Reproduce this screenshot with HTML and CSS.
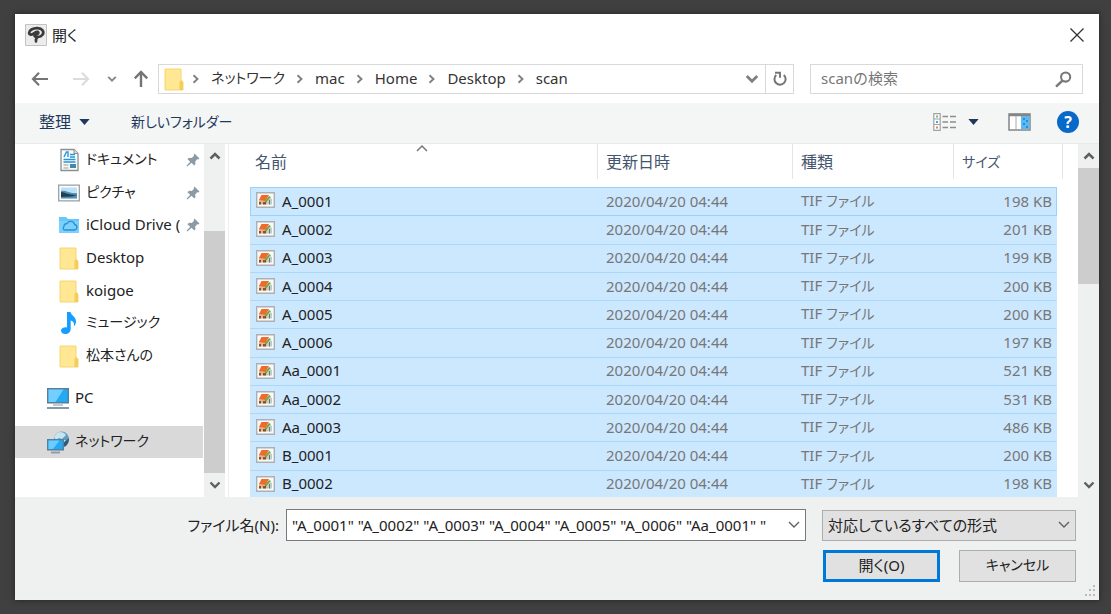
FILE: index.html
```html
<!DOCTYPE html>
<html lang="ja">
<head>
<meta charset="utf-8">
<title>開く</title>
<link rel="stylesheet" href="styles.css">
</head>
<body>
<svg class="defs" aria-hidden="true">
  <defs>
    <symbol id="folder" viewBox="0 0 22 24"><path d="M2 2h16v11l2 2v8H2z" fill="#ffe794"/><path d="M2 2h16v11l2 2v8H2z" fill="none" stroke="#f5d670"/><path d="M16.500 23v-8l1.500-2 2 2v8z" fill="#f3cf57"/></symbol>
    <symbol id="pin" viewBox="0 0 14 14"><path d="M8.500.5l5 5-1.300.9-1-.1-2 2.200.2 2.700-1.200 1.200-2.600-2.600L1.300 13.500l-.8-.8 3.700-3.900L1.500 6.300 3 4.800l2.700.2L7.900 3l-.1-1.100z" fill="#8c9aa5"/></symbol>
    <symbol id="down" viewBox="0 0 12 12"><path d="M1.500 3.500L6 8l4.500-4.500" fill="none" stroke="currentColor" stroke-width="2.400"/></symbol>
    <symbol id="thin-down" viewBox="0 0 12 12"><path d="M1 3l5 5 5-5" fill="none" stroke="#606060" stroke-width="1.400"/></symbol>
    <symbol id="up" viewBox="0 0 12 12"><path d="M1.500 8.500L6 4l4.500 4.500" fill="none" stroke="currentColor" stroke-width="2.600"/></symbol>
    <symbol id="next" viewBox="0 0 8 10"><path d="M1.500 1.200L5.500 5 1.500 8.800" fill="none" stroke="#808080" stroke-width="1.900"/></symbol>
    <symbol id="tif" viewBox="0 0 19 16"><path d="M.7.7h17.600v14.600H.7z" fill="#fafafa" stroke="#adb0b3" stroke-width="1.400"/><path d="M3 7.500l8 1v4H3z" fill="#ddb88e"/><path d="M3 10h2v2.500H3zM7 10h3v2.500H7z" fill="#8c5230"/><path d="M5.500 3H13l-3.500 6L3 8z" fill="#f06a2b"/><path d="M13 4l-4 5v1h2l4-5z" fill="#76a743"/><path d="M11 9.500l3-3.500 2 1v5.500h-5z" fill="#c3cdc7"/><path d="M13.500 8v4.500" stroke="#68776f"/></symbol>
  </defs>
</svg>
<main class="window">
  <header class="titlebar">
    <svg class="app-icon" viewBox="0 0 22 22"><path d="M.5.500h21v21H.5z" fill="#ececec" stroke="#c2c2c2"/><path d="M12.500 7.800c-2-.6-3.300 2.700-6.300 2.800C3.500 10.500 3.300 7.500 6.500 5.500c3.500-2 9-1.900 11 .7 2.200 3.300-.7 6.600-4.500 6.800-1.600.1-2.600-.3-3.400-.9M12.200 13.500c-1.200 1-1.400 2-1.200 3.800M12.500 7.800c1.700.8.700 2.500-1.500 2.800" fill="none" stroke="#3b3b3b" stroke-width="2.700" stroke-linecap="round" stroke-linejoin="round"/></svg>
    <h1 class="title">開く</h1>
    <button class="plain close" aria-label="閉じる"><svg viewBox="0 0 16 16"><path d="M1.500 1.500l13 13m0-13l-13 13" fill="none" stroke="#333" stroke-width="1.300"/></svg></button>
  </header>

  <nav class="navbar" aria-label="場所">
    <div class="history">
      <button class="plain arrow" aria-label="戻る"><svg viewBox="0 0 18 18"><path d="M17 9H2.500M8 2.800L2 9l6 6.200" fill="none" stroke="#757575" stroke-width="2.200"/></svg></button>
      <button class="plain arrow forward" aria-label="進む"><svg viewBox="0 0 18 18"><path d="M1 9h14.500M10 2.800L16 9l-6 6.200" fill="none" stroke="#dcdcdc" stroke-width="2.200"/></svg></button>
      <button class="plain recent" aria-label="最近の場所"><svg viewBox="0 0 12 12"><use href="#down"/></svg></button>
      <button class="plain arrow" aria-label="上へ"><svg viewBox="0 0 18 18"><path d="M9 17V2.500M2.800 8.300L9 2l6.200 6.300" fill="none" stroke="#757575" stroke-width="2.400"/></svg></button>
    </div>
    <div class="address">
      <svg class="folder-icon"><use href="#folder"/></svg>
      <svg class="next"><use href="#next"/></svg><a class="kana" href="#network">ネットワーク</a>
      <svg class="next"><use href="#next"/></svg><a href="#mac">mac</a>
      <svg class="next"><use href="#next"/></svg><a href="#home">Home</a>
      <svg class="next"><use href="#next"/></svg><a href="#desktop">Desktop</a>
      <svg class="next"><use href="#next"/></svg><a href="#scan">scan</a>
      <button class="plain history-list" aria-label="以前の場所"><svg viewBox="0 0 12 12"><use href="#down"/></svg></button>
      <button class="plain refresh" aria-label="更新"><svg viewBox="0 0 16 16"><path d="M11.800 3.900A5.600 5.600 0 1 1 4.200 4" fill="none" stroke="#757575" stroke-width="2"/><path d="M3 1.800h5v5" fill="none" stroke="#757575" stroke-width="1.900"/></svg></button>
    </div>
    <div class="search">
      <input type="search" aria-label="scanの検索" placeholder="scanの検索">
      <svg class="lens" viewBox="0 0 16 16"><circle cx="10" cy="5.700" r="4.300" fill="none" stroke="#777" stroke-width="1.900"/><path d="M7 9L1 14.700" stroke="#777" stroke-width="2.300"/></svg>
    </div>
  </nav>

  <div class="toolbar">
    <button class="plain organize">整理 <svg viewBox="0 0 12 7"><path d="M0 0h12L6 7z" fill="#1e395b"/></svg></button>
    <button class="plain new-folder">新しいフォルダー</button>
    <button class="plain views" aria-label="表示方法"><svg class="list-icon" viewBox="0 0 24 18"><path d="M.8.600h6.400v16.800H.8zM1 6h6M1 11.500h6" fill="#fff" stroke="#a2a2a2" stroke-width="1.200"/><path d="M3 2.500h2v2H3z" fill="#6fb596"/><path d="M3 8h2v2H3z" fill="#3ba7ee"/><path d="M3 13.500h2v2H3z" fill="#e08947"/><path d="M9.500 3.500H15m2 0h6M9.500 9H15m2 0h6M9.500 14.500H15m2 0h6" stroke="#8d8d8d" stroke-width="1.600"/></svg></button>
    <button class="plain view-menu" aria-label="その他のオプション"><svg viewBox="0 0 12 7"><path d="M0 0h12L6 7z" fill="#1e395b"/></svg></button>
    <button class="plain preview" aria-label="プレビュー"><svg viewBox="0 0 23 18"><path d="M1 1h21v16H1z" fill="#fff" stroke="#858585" stroke-width="1.500"/><path d="M1 2h21" stroke="#858585" stroke-width="2.500"/><path d="M8 3v13" stroke="#aaa"/><path d="M13 3h8.500v13H13z" fill="#5cb8f2"/><path d="M15 5h2v2h-2zm3 2h2v2h-2zm-3 3h2v2h-2zm3 3h2v2h-2z" fill="#278dd5"/></svg></button>
    <button class="plain help" aria-label="ヘルプ">?</button>
  </div>

  <div class="content">
    <aside class="sidebar">
      <ul class="quick">
        <li><svg class="icon" viewBox="0 0 22 24"><path d="M3 1.500h13l4 4v17H3z" fill="#fafafa" stroke="#8b9090" stroke-width="1.300"/><path d="M16 1.500v4h4" fill="#ddd" stroke="#8b9090"/><path d="M6 9l2.500-5H10v5M5.500 11.500h12M5.500 14h12M12 6.500h5M12 9h5" fill="none" stroke="#2596dd" stroke-width="1.400"/><path d="M5.500 17h5m-5 3h5" stroke="#999"/><path d="M12 16h6v4h-6z" fill="#4788aa"/></svg><a class="kana" href="#documents">ドキュメント</a><svg class="pin"><use href="#pin"/></svg></li>
        <li><svg class="icon" viewBox="0 0 22 24"><path d="M.7 4.200h20.600v15.600H.7z" fill="#fff" stroke="#999fa3" stroke-width="1.300"/><path d="M3 6.500h16v11H3z" fill="#b9e1f8"/><path d="M3 10c6-1 8 3 16 2v5.500H3z" fill="#548fb5"/><path d="M3 11c4 0 6 3 16 3l-5 1.500L3 16z" fill="#223f50"/></svg><a class="kana" href="#pictures">ピクチャ</a><svg class="pin"><use href="#pin"/></svg></li>
        <li><svg class="icon" viewBox="0 0 22 24"><path d="M1 4h7l2 2h11v14H1z" fill="#65c7fb"/><path d="M1 8h20v12H1z" fill="#7bd0ff"/><path d="M7 17h9.500a2.800 2.800 0 0 0 .2-5.500A4.200 4.200 0 0 0 9 10.500a3 3 0 0 0-3 3 1.900 1.900 0 0 0 1 3.500z" fill="none" stroke="#2a91ca" stroke-width="1.300"/></svg><a href="#icloud">iCloud Drive (</a><svg class="pin"><use href="#pin"/></svg></li>
        <li><svg class="icon"><use href="#folder"/></svg><a href="#desktop">Desktop</a></li>
        <li><svg class="icon"><use href="#folder"/></svg><a href="#koigoe">koigoe</a></li>
        <li><svg class="icon" viewBox="0 0 22 24"><path d="M9 1h3.500c.6 3.500 5.500 4.700 5.500 9.500 0 2.200-.8 3.700-2.200 5 .7-3.300-.2-5.300-3.100-6V18c0 3-2.600 5-5.500 5-2.500 0-4.200-1.300-4.200-3.200C3 17.500 5.500 16 9 16.400z" fill="#159eff"/></svg><a class="kana" href="#music">ミュージック</a></li>
        <li><svg class="icon"><use href="#folder"/></svg><a class="kana" href="#matsumoto">松本さんの</a></li>
      </ul>
      <ul class="places">
        <li><svg class="icon" viewBox="0 0 22 24"><path d="M.7 2.700h20.600v14H.7z" fill="#24a9f5" stroke="#5b7d95" stroke-width="1.400"/><path d="M1.500 3.500h15l-8 12.500h-7z" fill="#74ceff"/><path d="M6 19h10" stroke="#a7bac5" stroke-width="1.500"/><path d="M0 22h22" stroke="#8199a8" stroke-width="2"/></svg><a href="#pc">PC</a></li>
        <li class="current"><svg class="icon" viewBox="0 0 22 24"><circle cx="14.500" cy="9" r="7.500" fill="#619bbd"/><path d="M10 3c3-2 7-1 9 2l-4 4-3-1-3 2-2-3zM17 10l4 1-3 4-3-2z" fill="#c7e3ee"/><path d="M16 13l6-5c0 6-3 9-6 9z" fill="#345a7a"/><path d="M.7 9.700h15.600v10H.7z" fill="#24a9f5" stroke="#50819f" stroke-width="1.400"/><path d="M1.500 10.500h11L6 19H1.500z" fill="#6dccff"/><path d="M4 22.500h9" stroke="#879ba8" stroke-width="1.800"/></svg><a class="kana" href="#network" aria-current="page">ネットワーク</a></li>
      </ul>
    </aside>
    <div class="scrollbar side-scroll" aria-hidden="true"><svg><use href="#up"/></svg><div class="track"><div class="thumb"></div></div><svg><use href="#down"/></svg></div>
    <section class="files">
      <table>
        <colgroup><col><col class="date-col"><col class="type-col"><col class="size-col"></colgroup>
        <thead><tr><th>名前<svg class="sort" viewBox="0 0 12 8"><path d="M1 7l5-5 5 5" fill="none" stroke="#777" stroke-width="1.500"/></svg></th><th>更新日時</th><th>種類</th><th class="kana size">サイズ</th></tr></thead>
        <tbody>
          <tr class="focused"><td><svg class="tif"><use href="#tif"/></svg>A_0001</td><td>2020/04/20 04:44</td><td>TIF <span class="kana">ファイル</span></td><td>198 KB</td></tr>
          <tr><td><svg class="tif"><use href="#tif"/></svg>A_0002</td><td>2020/04/20 04:44</td><td>TIF <span class="kana">ファイル</span></td><td>201 KB</td></tr>
          <tr><td><svg class="tif"><use href="#tif"/></svg>A_0003</td><td>2020/04/20 04:44</td><td>TIF <span class="kana">ファイル</span></td><td>199 KB</td></tr>
          <tr><td><svg class="tif"><use href="#tif"/></svg>A_0004</td><td>2020/04/20 04:44</td><td>TIF <span class="kana">ファイル</span></td><td>200 KB</td></tr>
          <tr><td><svg class="tif"><use href="#tif"/></svg>A_0005</td><td>2020/04/20 04:44</td><td>TIF <span class="kana">ファイル</span></td><td>200 KB</td></tr>
          <tr><td><svg class="tif"><use href="#tif"/></svg>A_0006</td><td>2020/04/20 04:44</td><td>TIF <span class="kana">ファイル</span></td><td>197 KB</td></tr>
          <tr><td><svg class="tif"><use href="#tif"/></svg>Aa_0001</td><td>2020/04/20 04:44</td><td>TIF <span class="kana">ファイル</span></td><td>521 KB</td></tr>
          <tr><td><svg class="tif"><use href="#tif"/></svg>Aa_0002</td><td>2020/04/20 04:44</td><td>TIF <span class="kana">ファイル</span></td><td>531 KB</td></tr>
          <tr><td><svg class="tif"><use href="#tif"/></svg>Aa_0003</td><td>2020/04/20 04:44</td><td>TIF <span class="kana">ファイル</span></td><td>486 KB</td></tr>
          <tr><td><svg class="tif"><use href="#tif"/></svg>B_0001</td><td>2020/04/20 04:44</td><td>TIF <span class="kana">ファイル</span></td><td>200 KB</td></tr>
          <tr><td><svg class="tif"><use href="#tif"/></svg>B_0002</td><td>2020/04/20 04:44</td><td>TIF <span class="kana">ファイル</span></td><td>198 KB</td></tr>
        </tbody>
      </table>
    </section>
    <div class="scrollbar file-scroll" aria-hidden="true"><svg><use href="#up"/></svg><div class="track"><div class="thumb"></div></div><svg><use href="#down"/></svg></div>
  </div>

  <footer class="footer">
    <label class="mixed" for="filename">ファイル名(N):</label>
    <div class="combo"><input id="filename" type="text" value='"A_0001" "A_0002" "A_0003" "A_0004" "A_0005" "A_0006" "Aa_0001" "'><button class="plain" aria-label="ファイル名の一覧"><svg viewBox="0 0 12 12"><use href="#thin-down"/></svg></button></div>
    <div class="format"><select class="mixed" aria-label="ファイルの種類"><option>対応しているすべての形式</option></select><svg viewBox="0 0 12 12"><use href="#thin-down"/></svg></div>
    <div class="actions"><button class="action primary">開く(O)</button><button class="action kana">キャンセル</button></div>
    <svg class="grip" viewBox="0 0 12 12"><path d="M9 0h2v2H9zM5 4h2v2H5zM9 4h2v2H9zM1 9h2v2H1zM5 9h2v2H5zM9 9h2v2H9z" fill="#bcbcbc"/></svg>
  </footer>
</main>
</body>
</html>
```
FILE: styles.css
```css
* { box-sizing: border-box; }
body {
  margin: 0;
  height: 100vh;
  padding: 14px 12px 14px 15px;
  display: flex;
  background: #404040;
  color: #222;
  font: 15px/20px "Noto Sans", "Noto Sans CJK JP", sans-serif;
}
svg { display: block; flex: none; }
a { color: inherit; text-decoration: none; white-space: nowrap; }
ul { list-style: none; margin: 0; padding: 0; }
button, input, select { font: inherit; color: inherit; margin: 0; }
.defs { position: absolute; width: 0; height: 0; }
.plain { border: 0; padding: 0; background: none; display: flex; align-items: center; justify-content: center; white-space: nowrap; }
.kana, .mixed, .new-folder { font-feature-settings: "palt"; }
.kana { font-size: 14px; }

.window { flex: 1; min-width: 0; display: flex; flex-direction: column; background: #fff; box-shadow: 0 0 6px #222; }
.titlebar { height: 41px; padding: 0 14px 0 10px; display: flex; align-items: center; gap: 5px; }
.app-icon { width: 22px; height: 22px; }
.title { margin: 0; font-size: 15px; font-weight: 400; font-feature-settings: "palt"; }
.close { margin-left: auto; }
.close svg { width: 16px; height: 16px; }

.navbar { height: 48px; padding: 0 16px; display: flex; align-items: center; gap: 16px; }
.history { width: 127px; margin-right: -16px; display: flex; align-items: center; }
.arrow svg { width: 18px; height: 18px; }
.forward { margin-left: 23px; }
.recent { margin: 0 15px 0 17px; }
.recent svg { width: 10px; height: 10px; color: #888; }
.address, .search { height: 30px; border: 1px solid #d9d9d9; display: flex; align-items: center; }
.address { flex: 1; gap: 12px; padding-left: 4px; color: #333; }
.address a { padding-bottom: 2px; }
.folder-icon { width: 22px; height: 24px; margin-right: -5px; }
.next { width: 8px; height: 10px; margin-right: -1px; }
.next:nth-of-type(n + 3) { margin-left: -1px; }
.history-list { margin-left: auto; color: #808080; }
.history-list svg { width: 14px; height: 14px; }
.refresh { width: 28px; height: 28px; margin-left: -6px; border-left: 1px solid #d9d9d9; }
.refresh svg { width: 16px; height: 16px; }
.search { width: 273px; padding: 0 10px; }
.search input { flex: 1; min-width: 0; padding: 0 0 2px; border: 0; outline: 0; background: none; appearance: none; }
.search input::placeholder { color: #777; opacity: 1; font-size: 15px; }
.lens { width: 17px; height: 17px; }

.toolbar { height: 41px; padding: 0 20px 2px 24px; display: flex; align-items: center; background: #f4f6f6; border-bottom: 1px solid #e8eaea; color: #1e395b; }
.organize { gap: 8px; font-size: 16px; }
.organize svg, .view-menu svg { width: 11px; height: 6px; }
.new-folder { margin-left: 41px; font-size: 14px; }
.views { margin-left: auto; }
.list-icon { width: 24px; height: 18px; }
.view-menu { margin: 0 29px 0 11px; }
.preview svg { width: 23px; height: 18px; }
.help { width: 22px; height: 22px; margin-left: 26px; border-radius: 50%; background: #0869c8; color: #fff; font-weight: 700; font-size: 16px; }

.content { flex: 1; min-height: 0; display: flex; overflow: hidden; }
.sidebar { width: 188px; flex: none; overflow: hidden; }
.sidebar li { display: flex; align-items: center; gap: 6px; }
.sidebar a { padding-bottom: 2px; }
.quick { height: 228px; display: grid; grid-auto-rows: 1fr; }
.quick li { padding: 0 4px 0 43px; }
.icon { width: 22px; height: 24px; }
.pin { width: 14px; height: 14px; margin-left: auto; }
.quick a { min-width: 0; overflow: hidden; }
.places { margin-top: 10px; display: grid; gap: 12px; }
.places li { height: 32px; padding-left: 32px; }
.places .current { background: #d9d9d9; }
.scrollbar { width: 21px; flex: none; display: flex; flex-direction: column; align-items: center; background: #eff0f0; color: #606060; }
.scrollbar svg { width: 12px; height: 12px; margin: 6px 0; }
.side-scroll { margin-left: 1px; }
.track { flex: 1; width: 100%; display: grid; }
.thumb { background: #cdcdcd; }
.side-scroll .track { grid-template-rows: 63fr 243fr; }
.side-scroll .thumb { grid-row: 2; }
.file-scroll .track { grid-template-rows: 116fr 190fr; }

.files { flex: 1; min-width: 0; margin-left: 3px; padding: 0 21px; border-left: 1px solid #eee; }
table { width: 100%; height: calc(100% + 2px); table-layout: fixed; border-collapse: separate; border-spacing: 0; }
.date-col { width: 195px; }
.type-col { width: 161px; }
.size-col { width: 104px; }
thead tr { height: 43px; }
th { position: relative; padding: 0 0 8px 9px; font-size: 16px; font-weight: 400; text-align: left; color: #44566f; background: linear-gradient(#e5e5e5, #e5e5e5) left top / 1px 35px no-repeat; }
th:first-child { padding-left: 5px; background: none; }
.size::after { content: ""; position: absolute; top: 0; right: -6px; width: 1px; height: 35px; background: #e5e5e5; }
.sort { position: absolute; left: 50%; top: 0; width: 12px; height: 8px; margin-left: -8px; }
td { padding: 0 0 2px 9px; background: #cce8ff; color: #777; border-bottom: 1px solid #a8d8fc; white-space: nowrap; }
td:first-child { padding-left: 32px; position: relative; color: #222; }
td:last-child { padding-right: 4px; text-align: right; border-right: 1px solid #cce8ff; }
.focused td { border-top: 1px solid #99d1ff; border-bottom-color: #99d1ff; }
.focused td:first-child { border-left: 1px solid #99d1ff; padding-left: 31px; }
.focused td:last-child { border-right-color: #99d1ff; }
.tif { position: absolute; left: 6px; top: 5px; width: 19px; height: 16px; }
.focused .tif { left: 5px; top: 4px; }

.footer { position: relative; height: 103px; padding: 12px 23px 18px 0; display: grid; grid-template-columns: 264px 1fr 254px; grid-template-rows: 32px 32px; column-gap: 7px; row-gap: 9px; align-items: center; background: #eff0f0; }
.footer label { justify-self: end; }
.combo { height: 32px; margin-right: 9px; display: flex; align-items: center; background: #fff; border: 1px solid #7a7a7a; }
.combo input { flex: 1; min-width: 0; padding: 0 0 0 5px; border: 0; outline: 0; background: none; }
.combo button { width: 22px; height: 28px; }
.combo svg, .format svg { width: 12px; height: 12px; }
.format { display: grid; align-items: center; }
.format select { grid-area: 1 / 1; width: 100%; height: 31px; padding: 0 24px 0 5px; appearance: none; border: 1px solid #adadad; border-radius: 0; background: #e1e1e1; }
.format svg { grid-area: 1 / 1; justify-self: end; margin-right: 6px; pointer-events: none; }
.actions { grid-column: 3; display: grid; grid-template-columns: 1fr 1fr; gap: 19px; padding-left: 1px; }
.action { height: 32px; padding: 0 0 2px; border: 1px solid #adadad; background: #e1e1e1; }
.primary { border: 3px solid #0078d7; font-feature-settings: "palt"; }
.grip { position: absolute; right: 3px; bottom: 3px; width: 12px; height: 12px; }
```
